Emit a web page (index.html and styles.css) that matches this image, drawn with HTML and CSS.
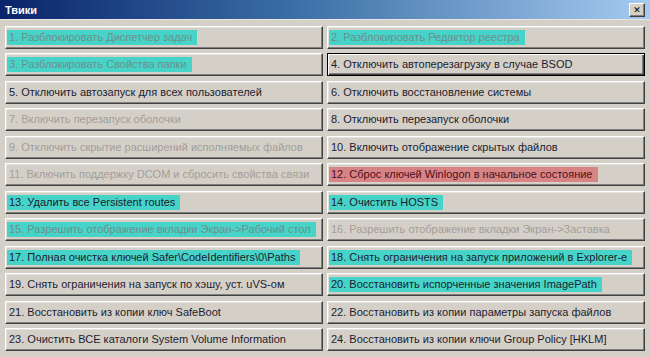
FILE: index.html
```html
<!DOCTYPE html>
<html lang="ru">
<head>
    <meta charset="UTF-8">
    <title>Твики</title>
    <link rel="stylesheet" href="styles.css">
</head>
<body>
    <div class="window">
        <div class="titlebar">
            <span class="title">Твики</span>
            <button class="close">✕</button>
        </div>

        <div class="tweaks">
            <button class="tweak"><span class="label hl dim">1. Разблокировать Диспетчер задач</span></button>
            <button class="tweak"><span class="label hl dim">2. Разблокировать Редактор реестра</span></button>
            <button class="tweak"><span class="label hl dim">3. Разблокировать Свойства папки</span></button>
            <button class="tweak default"><span class="label">4. Отключить автоперезагрузку в случае BSOD</span></button>
            <button class="tweak"><span class="label">5. Отключить автозапуск для всех пользователей</span></button>
            <button class="tweak"><span class="label">6. Отключить восстановление системы</span></button>
            <button class="tweak"><span class="label dim">7. Включить перезапуск оболочки</span></button>
            <button class="tweak"><span class="label">8. Отключить перезапуск оболочки</span></button>
            <button class="tweak"><span class="label dim">9. Отключить скрытие расширений исполняемых файлов</span></button>
            <button class="tweak"><span class="label">10. Включить отображение скрытых файлов</span></button>
            <button class="tweak"><span class="label dim">11. Включить поддержку DCOM и сбросить свойства связи</span></button>
            <button class="tweak"><span class="label warn">12. Сброс ключей Winlogon в начальное состояние</span></button>
            <button class="tweak"><span class="label hl">13. Удалить все Persistent routes</span></button>
            <button class="tweak"><span class="label hl">14. Очистить HOSTS</span></button>
            <button class="tweak"><span class="label hl dim">15. Разрешить отображение вкладки Экран-&gt;Рабочий стол</span></button>
            <button class="tweak"><span class="label dim">16. Разрешить отображение вкладки Экран-&gt;Заставка</span></button>
            <button class="tweak"><span class="label hl">17. Полная очистка ключей Safer\CodeIdentifiers\0\Paths</span></button>
            <button class="tweak"><span class="label hl">18. Снять ограничения на запуск приложений в Explorer-е</span></button>
            <button class="tweak"><span class="label">19. Снять ограничения на запуск по хэшу, уст. uVS-ом</span></button>
            <button class="tweak"><span class="label hl">20. Восстановить испорченные значения ImagePath</span></button>
            <button class="tweak"><span class="label">21. Восстановить из копии ключ SafeBoot</span></button>
            <button class="tweak"><span class="label">22. Восстановить из копии параметры запуска файлов</span></button>
            <button class="tweak"><span class="label">23. Очистить ВСЕ каталоги System Volume Information</span></button>
            <button class="tweak"><span class="label">24. Восстановить из копии ключи Group Policy [HKLM]</span></button>
        </div>
    </div>
</body>
</html>
```

FILE: styles.css
```css
body {
    margin: 0;
    font-family: "Liberation Sans", Arial, sans-serif;
    font-size: 11px;
}
.window {
    width: 650px;
    height: 357px;
    background-color: #d4d0c8;
    box-sizing: border-box;
    overflow: hidden;
}
.titlebar {
    height: 19px;
    display: flex;
    align-items: center;
    justify-content: space-between;
    padding: 0 5px 0 5px;
    background: linear-gradient(to right, #0a246a 0%, #3a6ea5 45%, #a6caf0 100%);
    border-bottom: 1px solid #e8e6e0;
}
.title {
    color: #fff;
    font-weight: bold;
    font-size: 11px;
}
.close {
    width: 16px;
    height: 14px;
    padding: 0;
    margin-top: 1px;
    background-color: #d4d0c8;
    border: 1px solid;
    border-color: #fff #404040 #404040 #fff;
    box-shadow: inset -1px -1px #808080;
    font-family: "DejaVu Sans", sans-serif;
    font-size: 9px;
    font-weight: bold;
    line-height: 11px;
    color: #000;
}
.tweaks {
    display: grid;
    grid-template-columns: 318px 318px;
    grid-auto-rows: 23px;
    column-gap: 4px;
    row-gap: 4.5px;
    padding: 5.5px 0 0 5px;
}
.tweak {
    display: flex;
    align-items: center;
    padding: 0 0 0 1px;
    margin: 0;
    background-color: #d4d0c8;
    border: 1px solid;
    border-color: #fff #404040 #404040 #fff;
    box-shadow: inset -1px -1px #808080, inset 1px 1px #e4e2dc;
    font-family: inherit;
    font-size: 11px;
    text-align: left;
    color: #1c1c30;
    white-space: nowrap;
    overflow: hidden;
}
.tweak.default {
    border-color: #000;
    box-shadow: inset 1px 1px #fff, inset -1px -1px #404040, inset -2px -2px #808080;
}
.label {
    display: inline-block;
    height: 15px;
    line-height: 15px;
    padding: 0 5px 0 2px;
}
.label.hl {
    background-color: #46d4c8;
}
.label.warn {
    background-color: #d88484;
    color: #4a1020;
}
.label.dim {
    color: #a29e98;
}
.label.hl.dim {
    color: #6f8e8c;
}
```
